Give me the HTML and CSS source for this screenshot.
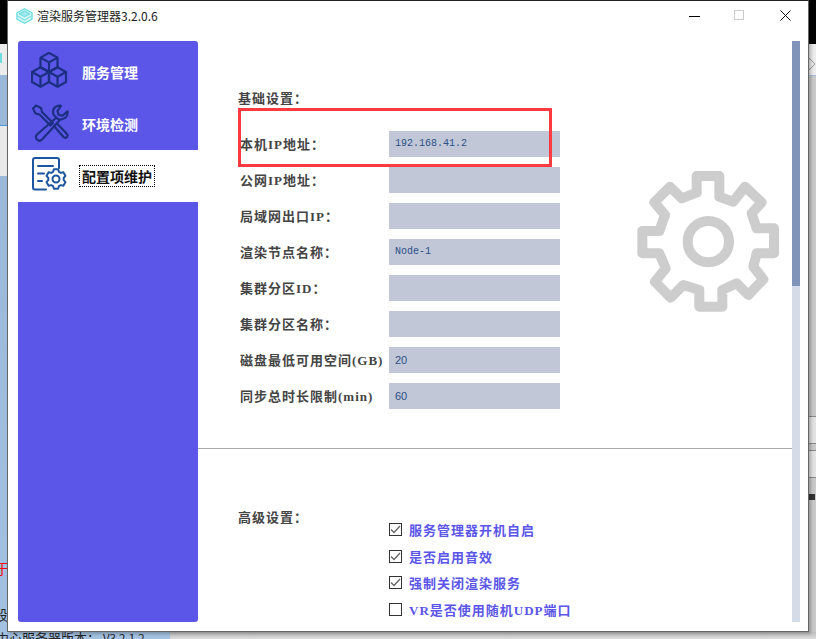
FILE: index.html
```html
<!DOCTYPE html>
<html lang="zh-CN">
<head>
<meta charset="utf-8">
<title>渲染服务管理器</title>
<link rel="stylesheet" href="styles.css">
</head>
<body>
<div class="desktop">
  <div class="bg bg-black-left"></div>
  <div class="bg bg-tab-left"></div>
  <div class="bg bg-teal"></div>
  <div class="bg bg-blue-left"></div>
  <div class="bg bg-line-left"></div>
  <div class="bg bg-gray-left"></div>
  <div class="bg bg-blue-left2"></div>
  <div class="bg bg-black-right"></div>
  <div class="bg bg-tab-right"><svg width="8" height="14" viewBox="0 0 8 14"><path d="M1 1l6 6-6 6" fill="none" stroke="#999" stroke-width="1"/></svg></div>
  <div class="bg bg-gray-right"></div>
  <div class="bg bg-row bg-row1"></div>
  <div class="bg bg-row bg-row2"></div>
  <div class="bg bg-glyph"></div>
  <div class="bg bg-bottom-blue"></div>
  <div class="bg bg-bottom-gray"></div>
  <span class="bg bg-red">于</span>
  <span class="bg bg-duan">段</span>
  <span class="bg bg-version">中心服务器版本： <span class="ver">V3.2.1.2</span></span>

  <main class="window">
    <header class="titlebar">
      <svg class="app-icon" width="17" height="16" viewBox="0 0 17 16">
        <path d="M8.500 .8L16 4.800v6.400L8.500 15.200 1 11.200V4.800z" fill="#d8f6f6" stroke="#62dcdf" stroke-width="1.300" stroke-linejoin="round"/>
        <path d="M8.500 2.800L14 5.800 8.500 8.800 3 5.800z" fill="#9fe8ea" stroke="#62dcdf" stroke-width="1"/>
        <path d="M1.500 8l7 4 7-4" fill="none" stroke="#7fe3e5" stroke-width="1.200"/>
      </svg>
      <span class="app-title">渲染服务管理器3.2.0.6</span>
      <div class="win-controls">
        <span class="ctl ctl-min"></span>
        <span class="ctl ctl-max"></span>
        <svg class="ctl-close" width="11" height="11" viewBox="0 0 11 11"><path d="M.5.5l10 10M10.500.5l-10 10" stroke="#111" stroke-width="1"/></svg>
      </div>
    </header>

    <div class="body">
      <nav class="sidebar">
        <div class="nav-item">
          <svg class="nav-icon" width="38" height="38" viewBox="0 0 38 38" fill="none" stroke="#1c2f80" stroke-width="2.200" stroke-linejoin="round">
            <path d="M18 .8l8.500 4.800v9.600L18 20l-8.500-4.800V5.600z"/>
            <path d="M9.500 5.600L18 10.400l8.500-4.800M18 10.400V20"/>
            <path d="M9.500 15.300L18 20v10l-8.500 4.800L1 30V20z"/>
            <path d="M1 20l8.500 4.800L18 20M9.500 24.800v10"/>
            <path d="M26.500 15.300L35 20v10l-8.500 4.800L18 30V20z"/>
            <path d="M18 20l8.500 4.800L35 20M26.500 24.800v10"/>
          </svg>
          <span class="nav-label">服务管理</span>
        </div>
        <div class="nav-item nav-second">
          <svg class="nav-icon" width="38" height="38" viewBox="0 0 38 38" fill="none" stroke="#1c2f80" stroke-width="2.200" stroke-linejoin="round" stroke-linecap="round">
            <path d="M2 4.500L5 1.500l5 2.500 1 4 11 11-2.500 2.500-11-11-4-1z"/>
            <path d="M25 14L6 30.500c-2 2-1 4 0 5s3 2 5 0L28 17"/>
            <path d="M30 1.800c-4-1-8 2-8 6 0 1.500.3 2.500 1 3.500l3 3c1.500 1 3.500 1.500 5 1 3.500-.8 6-4 5.500-8l-5 4.500-4-1.200-1-3.800z"/>
            <path d="M23 22l9.500 11c1.500 1.500 3 .5 3.500 0s1-2-.5-3.500L26 19.500"/>
          </svg>
          <span class="nav-label">环境检测</span>
        </div>
        <div class="nav-item nav-active">
          <svg class="nav-icon" width="36" height="34" viewBox="0 0 36 34" fill="none" stroke="#1d559f" stroke-width="2" stroke-linecap="round" stroke-linejoin="round">
            <path d="M14 32.500H3c-1 0-2-1-2-2V3c0-1 1-2 2-2h22c1 0 2 1 2 2v8"/>
            <path d="M6 9h15M6 16.500h6M6 24h4"/>
            <path d="M21.900 12.200h4.200l.8 2.600 1.900 1.100 2.600-.6 2.100 3.600-1.800 2v2.200l1.800 2-2.100 3.600-2.600-.6-1.900 1.100-.8 2.600h-4.200l-.8-2.600-1.900-1.100-2.600.6-2.100-3.600 1.800-2v-2.200l-1.800-2 2.100-3.600 2.600.6 1.900-1.100z"/>
            <circle cx="24" cy="22" r="3.500"/>
          </svg>
          <span class="nav-label nav-focus">配置项维护</span>
        </div>
      </nav>

      <div class="panel">
        <section class="basic">
          <h2 class="section-title">基础设置：</h2>
          <div class="fields">
            <div class="field"><span class="field-label">本机IP地址：</span><span class="field-input field-mono">192.168.41.2</span></div>
            <div class="field"><span class="field-label">公网IP地址：</span><span class="field-input"></span></div>
            <div class="field"><span class="field-label">局域网出口IP：</span><span class="field-input"></span></div>
            <div class="field"><span class="field-label">渲染节点名称：</span><span class="field-input field-mono">Node-1</span></div>
            <div class="field"><span class="field-label">集群分区ID：</span><span class="field-input"></span></div>
            <div class="field"><span class="field-label">集群分区名称：</span><span class="field-input"></span></div>
            <div class="field"><span class="field-label">磁盘最低可用空间(GB)</span><span class="field-input">20</span></div>
            <div class="field"><span class="field-label">同步总时长限制(min)</span><span class="field-input">60</span></div>
          </div>
        </section>
        <section class="advanced">
          <h2 class="section-title">高级设置：</h2>
          <ul class="checks">
            <li class="check"><span class="box"><svg width="11" height="9" viewBox="0 0 11 9"><path d="M1 4.500l3 3 6-6.500" fill="none" stroke="#666" stroke-width="1.300"/></svg></span>服务管理器开机自启</li>
            <li class="check"><span class="box"><svg width="11" height="9" viewBox="0 0 11 9"><path d="M1 4.500l3 3 6-6.500" fill="none" stroke="#666" stroke-width="1.300"/></svg></span>是否启用音效</li>
            <li class="check"><span class="box"><svg width="11" height="9" viewBox="0 0 11 9"><path d="M1 4.500l3 3 6-6.500" fill="none" stroke="#666" stroke-width="1.300"/></svg></span>强制关闭渲染服务</li>
            <li class="check"><span class="box"></span>VR是否使用随机UDP端口</li>
          </ul>
        </section>
        <div class="highlight"></div>
        <svg class="gear" width="144" height="144" viewBox="48 510 432 432" fill="none" stroke="#cdcdcd" stroke-width="30" stroke-linejoin="round">
          <path d="M230 528H298V590L340 605 375 560 425 607 395 640 410 685H462V760H410L400 800 430 838 385 885 350 850 307 870V920H238V870L190 855 152 893 105 845 137 805 118 760H67V693H118L135 645 103 607 150 560 185 595 230 578z"/>
          <circle cx="265" cy="725" r="62"/>
        </svg>
      </div>

      <div class="scrollbar"><div class="thumb"></div></div>
    </div>
  </main>
</div>
</body>
</html>
```

FILE: styles.css
```css
* { box-sizing: border-box; }
html, body { margin: 0; padding: 0; }
body { width: 816px; height: 639px; overflow: hidden; }

.desktop {
  position: relative;
  width: 816px;
  height: 639px;
  overflow: hidden;
  background: #c9c9c9;
  font-family: "Noto Sans CJK SC", "Liberation Sans", sans-serif;
}

.bg { position: absolute; }
.bg-black-left { left: 0; top: 0; width: 8px; height: 44px; background: #000; }
.bg-tab-left { left: 0; top: 44px; width: 8px; height: 31px; background: #ececec; }
.bg-teal { left: 0; top: 53px; width: 2px; height: 10px; background: #6fdede; }
.bg-blue-left { left: 0; top: 75px; width: 8px; height: 50px; background: #9ab9d9; }
.bg-line-left { left: 0; top: 125px; width: 8px; height: 1px; background: #4a9ad8; }
.bg-gray-left { left: 0; top: 126px; width: 8px; height: 50px; background: #e9e9e9; }
.bg-blue-left2 { left: 0; top: 176px; width: 8px; height: 463px; background: linear-gradient(#9ab9d9, #a3c1e0); }
.bg-black-right { left: 808px; top: 0; width: 8px; height: 44px; background: #000; }
.bg-tab-right { left: 808px; top: 44px; width: 8px; height: 31px; background: #ececec; padding-top: 8px; }
.bg-gray-right { left: 808px; top: 75px; width: 8px; height: 564px; background: #c9c9c9; border-top: 1px solid #a9bcd8; }
.bg-row { left: 808px; width: 8px; height: 28px; background: #e2e2e2; border-top: 1px solid #888; border-bottom: 1px solid #888; }
.bg-row1 { top: 416px; }
.bg-row2 { top: 450px; }
.bg-glyph { left: 809px; top: 494px; width: 6px; height: 6px; background: #333; }
.bg-bottom-blue { left: 0; top: 632px; width: 170px; height: 7px; background: #a3c1e0; }
.bg-bottom-gray { left: 170px; top: 632px; width: 646px; height: 7px; background: linear-gradient(#bdbdbd, #dcdcdc); }
.bg-red { left: -5px; top: 560px; font-size: 14px; line-height: 16px; color: #f00; }
.bg-duan { left: -6px; top: 606px; font-size: 14px; line-height: 16px; color: #222; }
.bg-version { left: -4px; top: 629px; font-size: 13px; line-height: 18px; color: #222; white-space: nowrap; }
.ver { font-size: 11.500px; }

.window {
  position: absolute;
  left: 7px;
  top: 0;
  width: 802px;
  height: 632px;
  background: #fff;
  border: 1px solid #666;
  border-top-color: #222;
  display: flex;
  flex-direction: column;
  box-shadow: 2px 2px 3px rgba(0, 0, 0, .25);
}

.titlebar {
  height: 40px;
  flex: none;
  display: flex;
  align-items: flex-start;
  padding: 7px 17px 0 8px;
}
.app-icon { flex: none; }
.app-title { margin-left: 4px; font-size: 12px; line-height: 16px; color: #222; white-space: nowrap; }
.win-controls { margin-left: auto; display: flex; align-items: flex-start; padding-top: 2px; }
.ctl-min { display: block; width: 11px; height: 1px; background: #000; margin-top: 6px; margin-right: 34px; }
.ctl-max { display: block; width: 10px; height: 10px; border: 1px solid #ccc; margin-right: 36px; }
.ctl-close { display: block; }

.body { flex: 1; display: flex; min-height: 0; padding: 0 8px 9px 10px; }

.sidebar {
  width: 180px;
  flex: none;
  background: #5b56e8;
  border-radius: 3px;
  display: flex;
  flex-direction: column;
  padding-top: 11px;
}
.nav-item { display: flex; align-items: center; height: 38px; padding-left: 13px; }
.nav-second { margin-top: 14px; margin-bottom: 8px; }
.nav-icon { flex: none; }
.nav-label { margin-left: 13px; margin-top: 2px; font-size: 14px; font-weight: 700; line-height: 18px; color: #fff; white-space: nowrap; }
.nav-active {
  height: 52px;
  background: #fff;
  padding-left: 14px;
}
.nav-active .nav-icon { margin-top: -5px; }
.nav-focus { color: #111; margin-top: 0; outline: 1px dotted #000; outline-offset: 1px; padding: 0 1px; }

.panel { position: relative; flex: 1; min-width: 0; }

.basic { padding: 48px 0 0 40px; height: 408px; border-bottom: 1px solid #aaa; }
.section-title { margin: 0; font-family: "Liberation Serif", "Noto Sans CJK SC", serif; font-size: 13px; font-weight: 700; line-height: 20px; letter-spacing: 1px; color: #444; }
.fields { display: flex; flex-direction: column; gap: 10px; margin-top: 22px; }
.field { display: flex; align-items: center; height: 26px; }
.field-label { width: 149px; flex: none; margin-left: 2px; margin-bottom: 2px; font-family: "Liberation Serif", "Noto Sans CJK SC", serif; font-size: 13px; font-weight: 700; letter-spacing: 1px; color: #444; white-space: nowrap; }
.field-input {
  width: 171px;
  height: 26px;
  background: #c1c7d6;
  padding-left: 6px;
  font-family: "Liberation Sans", sans-serif;
  font-size: 11px;
  line-height: 26px;
  color: #2c5088;
}
.field-mono { font-family: "Liberation Mono", monospace; font-size: 10px; }

.advanced { display: flex; padding: 59px 0 0 40px; }
.advanced .section-title { width: 151px; flex: none; }
.checks { list-style: none; margin: 13px 0 0; padding: 0; display: flex; flex-direction: column; gap: 9.670px; }
.check { display: flex; align-items: center; height: 17px; font-family: "Liberation Serif", "Noto Sans CJK SC", serif; font-size: 13px; font-weight: 700; color: #5b56e8; white-space: nowrap; letter-spacing: 1px; }
.box { width: 13px; height: 13px; flex: none; border: 1px solid #333; margin-right: 7px; display: flex; align-items: center; justify-content: center; background: #fff; }

.highlight {
  position: absolute;
  left: 40px;
  top: 67px;
  width: 314px;
  height: 59px;
  border: 3px solid #ff3b3f;
  pointer-events: none;
}
.gear { position: absolute; left: 438px; top: 129px; }

.scrollbar { width: 8px; flex: none; background: #d6dbe8; height: 581px; }
.thumb { height: 245px; background: #7f94b8; }
```
